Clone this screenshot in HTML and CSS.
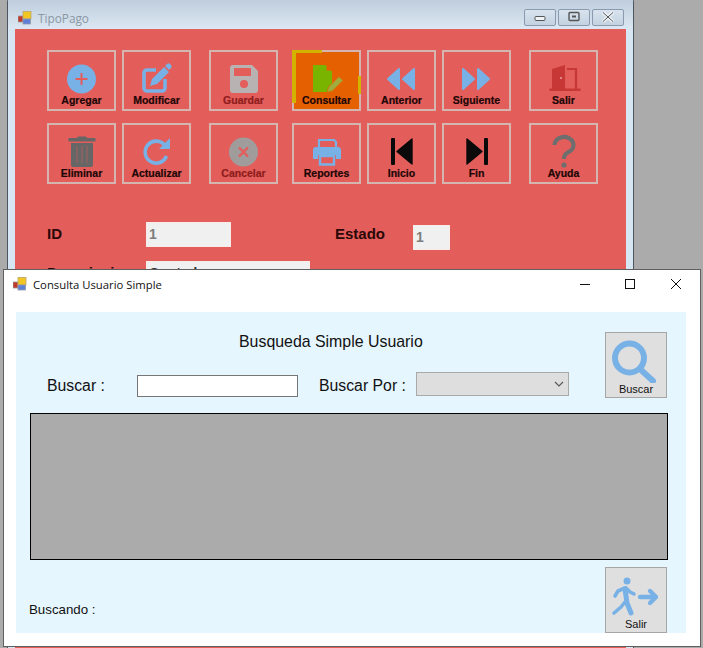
FILE: index.html
```html
<!DOCTYPE html>
<html>
<head>
    <meta charset="UTF-8">
    <meta name="viewport" content="width=device-width, initial-scale=1.0">
    <title>Consulta Usuario Simple</title>
    <link rel="stylesheet" href="styles.css">
</head>
<body>

<div class="desktop">

    <!-- back window -->
    <div class="win-back">
        <div class="back-title">
            <svg class="app-icon" viewBox="0 0 14 14"><rect x="0" y="5" width="5" height="6" fill="#c0392b" stroke="#999" stroke-width=".8"/><rect x="5" y="0.500" width="8" height="7.500" fill="#f3c623" stroke="#b9a66a" stroke-width=".8"/><rect x="5" y="8" width="7.500" height="5" fill="#5a80d8" stroke="#99a" stroke-width=".8"/></svg>
            <span class="back-title-text">TipoPago</span>
            <div class="back-caption">
                <div class="cap-btn"><svg viewBox="0 0 30 15"><rect x="10" y="6.500" width="10" height="4" rx="1" fill="#eef3f8" stroke="#555" stroke-width="1"/></svg></div>
                <div class="cap-btn"><svg viewBox="0 0 30 15"><rect x="10" y="2.500" width="10" height="8" rx="1" fill="none" stroke="#555" stroke-width="1.400"/><rect x="13" y="5.500" width="4" height="2" fill="#555"/></svg></div>
                <div class="cap-btn"><svg viewBox="0 0 30 15"><path d="M10 2.500l10 9M20 2.500l-10 9" stroke="#eef3f8" stroke-width="3.400"/><path d="M10 2.500l10 9M20 2.500l-10 9" stroke="#555" stroke-width="1"/></svg></div>
            </div>
        </div>
        <div class="back-client">
            <div class="tool-grid">
                <button class="tool"><svg viewBox="0 0 32 30"><circle cx="15.500" cy="16" r="14.500" fill="#78b1e6"/><path d="M9.500 16h12M15.500 10v12" stroke="#e35d5a" stroke-width="2"/></svg>Agregar</button>
                <button class="tool"><svg viewBox="0 0 32 30"><path d="M15 7H6a3 3 0 0 0-3 3v15a3 3 0 0 0 3 3h15a3 3 0 0 0 3-3v-9" fill="none" stroke="#78b1e6" stroke-width="3.600"/><path d="M9 23l2-7L23 4l5 5-12 12zM24 3l2-2a2 2 0 0 1 3 0l1 1a2 2 0 0 1 0 3l-2 2z" fill="#78b1e6"/></svg>Modificar</button>
                <button class="tool tool-off"><svg viewBox="0 0 32 30"><path d="M5 2h19l6 6v19a3 3 0 0 1-3 3H5a3 3 0 0 1-3-3V5a3 3 0 0 1 3-3z" fill="#b9b2b2"/><rect x="6" y="5" width="17" height="8" rx="1" fill="#e35d5a"/><circle cx="16" cy="21" r="4" fill="#e35d5a"/></svg>Guardar</button>
                <button class="tool tool-active"><svg viewBox="0 0 32 30"><path d="M2 2h12.500L21 8.500V29H2z" fill="#78b400"/><path d="M15.500 2l5.500 5.500h-5.500z" fill="#e56000"/><path d="M16 29.500l1.500-5.500 10.500-10.500 4 4L21.500 28z" fill="#a0ad3e" stroke="#e56000" stroke-width=".8"/></svg>Consultar</button>
                <button class="tool"><svg viewBox="0 0 32 30"><path d="M2 16L13 6v20zM17 16L28 6v20z" fill="#78b1e6" stroke="#78b1e6" stroke-width="2" stroke-linejoin="round"/></svg>Anterior</button>
                <button class="tool"><svg viewBox="0 0 32 30"><path d="M2 6l11 10L2 26zM17 6l11 10-11 10z" fill="#78b1e6" stroke="#78b1e6" stroke-width="2" stroke-linejoin="round"/></svg>Siguiente</button>
                <button class="tool"><svg viewBox="0 0 32 30"><path d="M4 6L17 2v24H4z" fill="#c73735"/><path d="M19 6h9v21" fill="none" stroke="#c73735" stroke-width="2.200"/><rect x="1.500" y="25.500" width="31" height="2.500" fill="#c73735"/><circle cx="13" cy="15" r="1" fill="#e8a0a0"/></svg>Salir</button>

                <button class="tool"><svg viewBox="0 0 32 30"><path d="M2.500 2h27v3.500h-27zM11 2l1-1.500h8L21 2z" fill="#666"/><path d="M5 7h22v22a2 2 0 0 1-2 2H7a2 2 0 0 1-2-2z" fill="#666"/><path d="M11 10v17M16 10v17M21 10v17" stroke="#8d6361" stroke-width="1.600"/></svg>Eliminar</button>
                <button class="tool"><svg viewBox="0 0 32 30"><path d="M24 9.500A11 11 0 1 0 25.500 20" fill="none" stroke="#78b1e6" stroke-width="3.600"/><path d="M29 2v11H18z" fill="#78b1e6"/></svg>Actualizar</button>
                <button class="tool tool-off"><svg viewBox="0 0 32 30"><circle cx="15.500" cy="16" r="14.500" fill="#a19c9c"/><path d="M11 11.500l9 9M20 11.500l-9 9" stroke="#e35d5a" stroke-width="2.400"/></svg>Cancelar</button>
                <button class="tool"><svg viewBox="0 0 32 30"><path d="M8 12V4h15l2 2v6" fill="none" stroke="#78b1e6" stroke-width="2.200"/><path d="M5 11h22a3 3 0 0 1 3 3v9h-5v-4H7v4H2v-9a3 3 0 0 1 3-3z" fill="#78b1e6"/><path d="M9 20h14v8.500H9z" fill="none" stroke="#78b1e6" stroke-width="2.400"/></svg>Reportes</button>
                <button class="tool"><svg viewBox="0 0 32 30"><rect x="5" y="2" width="4" height="27" rx="1" fill="#0a0a0a"/><path d="M11 15.500L26 3v25z" fill="#0a0a0a" stroke="#0a0a0a" stroke-width="1.400" stroke-linejoin="round"/></svg>Inicio</button>
                <button class="tool"><svg viewBox="0 0 32 30"><path d="M6 3l15 12.500L6 28z" fill="#0a0a0a" stroke="#0a0a0a" stroke-width="1.400" stroke-linejoin="round"/><rect x="23" y="2" width="4" height="27" rx="1" fill="#0a0a0a"/></svg>Fin</button>
                <button class="tool"><svg viewBox="0 0 32 30"><path d="M6.500 9a9.500 8 0 1 1 14 7c-3 2-4.500 3-4.500 7" fill="none" stroke="#6e6e6e" stroke-width="4.200"/><circle cx="16" cy="29" r="2.600" fill="#6e6e6e"/></svg>Ayuda</button>
            </div>

            <div class="back-row">
                <label class="back-label">ID</label>
                <input class="back-input back-id" type="text" value="1" readonly>
                <label class="back-label back-estado">Estado</label>
                <input class="back-input back-est" type="text" value="1" readonly>
            </div>
            <div class="back-row back-row2">
                <label class="back-label">Descripcion</label>
                <input class="back-input back-desc" type="text" value="Contado" readonly>
            </div>
        </div>
    </div>

    <!-- front window -->
    <div class="win-front">
        <div class="front-title">
            <svg class="app-icon" viewBox="0 0 14 14"><rect x="0" y="5" width="5" height="6" fill="#c0392b" stroke="#999" stroke-width=".8"/><rect x="5" y="0.500" width="8" height="7.500" fill="#f3c623" stroke="#b9a66a" stroke-width=".8"/><rect x="5" y="8" width="7.500" height="5" fill="#5a80d8" stroke="#99a" stroke-width=".8"/></svg>
            <span class="front-title-text">Consulta Usuario Simple</span>
            <div class="front-caption">
                <svg viewBox="0 0 10 10"><path d="M0 5.500h10" stroke="#111" stroke-width="1"/></svg>
                <svg viewBox="0 0 10 10"><rect x=".5" y=".5" width="9" height="9" fill="none" stroke="#111"/></svg>
                <svg class="close-x" viewBox="0 0 10 10"><path d="M0 0l10 10M10 0L0 10" stroke="#111" stroke-width="1"/></svg>
            </div>
        </div>

        <div class="panel">
            <div class="search-top">
                <div class="search-left">
                    <h2 class="search-heading">Busqueda Simple Usuario</h2>
                    <div class="search-row">
                        <label class="field-label buscar-label">Buscar :</label>
                        <input class="search-input" type="text">
                        <label class="field-label por-label">Buscar Por :</label>
                        <div class="combo">
                            <svg viewBox="0 0 10 6"><path d="M1 1l4 4 4-4" fill="none" stroke="#555" stroke-width="1.100"/></svg>
                        </div>
                    </div>
                </div>
                <button class="big-btn">
                    <svg viewBox="0 0 50 45"><circle cx="18.500" cy="20" r="14.500" fill="none" stroke="#78b1e6" stroke-width="6"/><path d="M29 31l13 12" stroke="#78b1e6" stroke-width="6" stroke-linecap="round"/></svg>
                    Buscar
                </button>
            </div>

            <div class="results"></div>

            <div class="search-bottom">
                <span class="status">Buscando :</span>
                <button class="big-btn">
                    <svg viewBox="0 0 50 45"><circle cx="16" cy="8" r="3.500" fill="#78b1e6"/><path d="M14 16l2 14 4 10" fill="none" stroke="#78b1e6" stroke-width="5" stroke-linecap="round" stroke-linejoin="round"/><path d="M14 15l-7 3-3 5M15 15l4 4 4 2M14 29l-4 5-7 6" fill="none" stroke="#78b1e6" stroke-width="3.600" stroke-linecap="round" stroke-linejoin="round"/><path d="M29 24h16M39 18l6 6-6 6" fill="none" stroke="#78b1e6" stroke-width="4.400" stroke-linecap="round" stroke-linejoin="round"/></svg>
                    Salir
                </button>
            </div>
        </div>
    </div>

</div>

</body>
</html>
```

FILE: styles.css
```css
body {
    margin: 0;
    padding: 0;
    background: #ababab;
    font-family: "Liberation Sans", Arial, sans-serif;
}
.desktop {
    position: relative;
    width: 703px;
    height: 648px;
    overflow: hidden;
    background: #ababab;
}
button {
    font-family: inherit;
    padding: 0;
}

/* back window */
.win-back {
    position: absolute;
    left: 7px;
    top: -4px;
    width: 627px;
    height: 660px;
    box-sizing: border-box;
    border: 1px solid #4d5560;
    border-radius: 6px 6px 0 0;
    background: #d6e6f3;
    padding: 0 7px;
}
.back-title {
    display: flex;
    align-items: flex-start;
    height: 32px;
    margin: 0 -7px;
    padding: 0 9px;
    background: linear-gradient(#bccbdb, #dbe8f3);
    border-radius: 5px 5px 0 0;
}
.app-icon {
    width: 14px;
    height: 14px;
    flex: none;
}
.back-title .app-icon {
    margin-top: 14px;
    margin-left: 1px;
}
.back-title-text {
    margin: 13px 0 0 6px;
    font-family: "Open Sans", sans-serif;
    font-size: 11.800px;
    color: #8b97a3;
}
.back-caption {
    display: flex;
    gap: 2px;
    margin: 12px 0 0 auto;
}
.cap-btn {
    width: 32px;
    height: 17px;
    box-sizing: border-box;
    border: 1px solid #8a9bb0;
    border-radius: 2px;
    background: linear-gradient(#d8e3ee, #c3d2e1);
}
.cap-btn svg {
    display: block;
    width: 30px;
    height: 15px;
}
.back-client {
    height: 620px;
    padding: 21px 0 0 32px;
    background: #e35d5a;
}
.tool-grid {
    display: grid;
    grid-template-columns: 75px 87px 83px 75px 75px 87px 69px;
    grid-auto-rows: 61px;
    row-gap: 12px;
}
.tool {
    position: relative;
    display: flex;
    flex-direction: column;
    align-items: center;
    width: 69px;
    height: 61px;
    box-sizing: border-box;
    padding-top: 11px;
    border: 2px solid #d4b5b0;
    background: transparent;
    font-size: 10.500px;
    font-weight: bold;
    line-height: 12px;
    color: #1c0606;
    -webkit-text-stroke: 0.2px #1c0606;
}
.tool svg {
    display: block;
    width: 32px;
    height: 30px;
    flex: none;
    margin-bottom: 1px;
    overflow: visible;
}
.tool-off {
    color: #8e1c1c;
    -webkit-text-stroke: 0.2px #8e1c1c;
}
.tool-active {
    background: #e56000;
}
.tool-active::before {
    content: "";
    position: absolute;
    left: -2px;
    top: -2px;
    width: 26px;
    height: 50px;
    border-left: 4px solid #d2b400;
    border-top: 3px solid #d2b400;
}
.tool-active::after {
    content: "";
    position: absolute;
    right: -2px;
    top: 24px;
    height: 18px;
    border-right: 3px solid #d2b400;
}
.back-row {
    display: flex;
    margin-top: 38px;
    align-items: flex-start;
}
.back-row2 {
    margin-top: 11px;
}
.back-label {
    width: 99px;
    flex: none;
    margin-top: -1px;
    font-size: 15px;
    font-weight: bold;
    line-height: 25px;
    color: #2a0808;
}
.back-input {
    box-sizing: border-box;
    height: 25px;
    padding: 0 2px 2px;
    border: 1px solid #f7ecea;
    background: #f0f0f0;
    font-family: inherit;
    font-size: 14px;
    font-weight: bold;
    color: #7d7d7d;
}
.back-id {
    width: 85px;
}
.back-estado {
    width: 78px;
    margin-left: 104px;
}
.back-est {
    width: 37px;
    margin-top: 3px;
}
.back-desc {
    width: 164px;
    color: #333;
}

/* front window */
.win-front {
    position: absolute;
    left: 3px;
    top: 269px;
    width: 698px;
    height: 378px;
    box-sizing: border-box;
    border: 1px solid #5f5f5f;
    background: #fff;
}
.front-title {
    display: flex;
    align-items: center;
    height: 28px;
    padding: 0 0 2px 9px;
}
.front-title-text {
    margin-left: 6px;
    font-family: "Open Sans", sans-serif;
    font-size: 11.300px;
    color: #111;
}
.front-caption {
    display: flex;
    gap: 35px;
    margin-left: auto;
    padding-right: 19px;
}
.front-caption svg {
    display: block;
    width: 10px;
    height: 10px;
}
.front-caption .close-x {
    margin-left: 1px;
}
.panel {
    display: flex;
    flex-direction: column;
    margin: 12px 14px 0 12px;
    height: 321px;
    padding: 20px 19px 0 14px;
    box-sizing: border-box;
    background: #e6f6fe;
}
.search-top {
    display: flex;
    justify-content: space-between;
}
.search-left {
    flex: 1;
}
.search-heading {
    margin: 1px 0 0;
    padding-left: 209px;
    font-size: 15.900px;
    font-weight: normal;
    line-height: 18px;
    color: #111;
}
.search-row {
    display: flex;
    align-items: flex-start;
    margin-top: 21px;
    padding-left: 17px;
}
.field-label {
    flex: none;
    font-size: 15.800px;
    line-height: 22px;
    color: #111;
}
.buscar-label {
    width: 90px;
    margin-top: 3px;
}
.por-label {
    width: 97px;
    margin-left: 21px;
    margin-top: 3px;
}
.search-input {
    width: 161px;
    height: 22px;
    box-sizing: border-box;
    margin-top: 3px;
    border: 1px solid #767676;
    background: #fff;
}
.combo {
    display: flex;
    align-items: center;
    justify-content: flex-end;
    width: 153px;
    height: 24px;
    box-sizing: border-box;
    padding-right: 4px;
    border: 1px solid #a9a9a9;
    background: #dedede;
}
.combo svg {
    width: 10px;
    height: 6px;
}
.big-btn {
    display: flex;
    flex-direction: column;
    align-items: center;
    width: 62px;
    height: 66px;
    box-sizing: border-box;
    flex: none;
    padding-top: 5px;
    border: 1px solid #a6a6a6;
    background: #dfdfdf;
    font-size: 11px;
    line-height: 13px;
    color: #111;
}
.big-btn svg {
    display: block;
    width: 50px;
    height: 45px;
    flex: none;
}
.results {
    height: 147px;
    margin: 15px -1px 0 0;
    box-sizing: border-box;
    border: 1px solid #000;
    background: #ababab;
}
.search-bottom {
    display: flex;
    justify-content: space-between;
    margin-top: 7px;
}
.status {
    align-self: flex-end;
    margin: 0 0 15px -1px;
    font-size: 13.300px;
    line-height: 16px;
    color: #111;
}
```
